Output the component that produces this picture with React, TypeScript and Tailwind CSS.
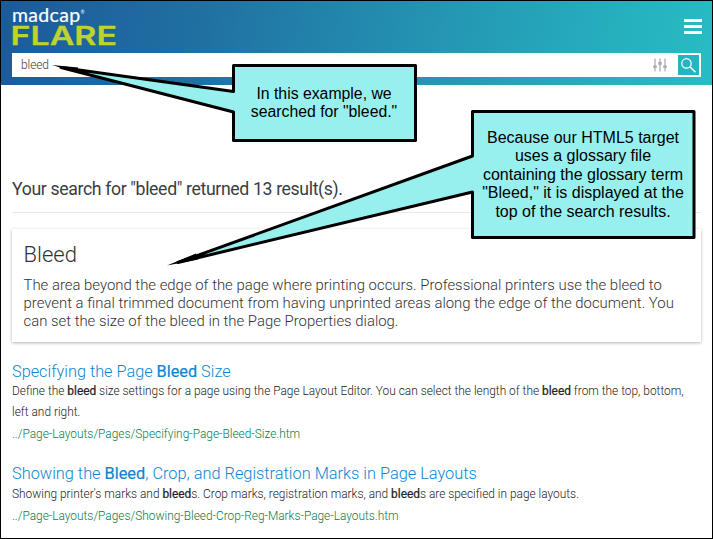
import React from "react";

const Line = ({ className = "", children }: { className?: string; children: React.ReactNode }) => (
  <div className={"whitespace-nowrap " + className}><span>{children}</span></div>
);

const B = ({ children }: { children: React.ReactNode }) => (
  <b className="font-normal [-webkit-text-stroke:0.2px_currentColor]">{children}</b>
);

export default function App() {
  return (
    <div className="relative h-[539px] w-[713px] overflow-hidden border border-black bg-white font-['Roboto',sans-serif] text-[#333]">
      <header className="flex h-[84px] flex-col bg-[linear-gradient(100deg,#1c5a9b_0%,#2070a2_28%,#2596b3_62%,#26b2bf_88%,#27bcc4_100%)] pl-[11px] pr-[11px]">
        <div className="flex h-[52px] justify-between">
          <div className="flex flex-col">
            <div className="mt-[4px] flex h-[18px] items-start whitespace-nowrap font-['Lato',sans-serif] text-[19.5px] leading-[19px] tracking-[0.3px] text-white">
              <span className="[-webkit-text-stroke:0.2px_#fff]">madcap</span>
              <span className="mt-[5px] text-[5px] leading-[5px]">®</span>
            </div>
            <svg className="-ml-[3px] overflow-visible" width="114" height="30" viewBox="0 0 114 30">
              <text x="1.5" y="21.9" textLength="106.5" lengthAdjust="spacingAndGlyphs" fill="#bdd42f" stroke="#bdd42f" strokeWidth="0.3" className="font-['Inter',sans-serif] text-[25.5px] font-semibold">FLARE</text>
            </svg>
          </div>
          <div className="mr-[-1px] mt-[18px] flex w-[18px] flex-col gap-[3px]">
            <i className="h-[3px] bg-white" />
            <i className="h-[3px] bg-white" />
            <i className="h-[3px] bg-white" />
          </div>
        </div>
        <div className="flex h-[24px] items-center justify-between bg-white pl-[9px] pr-[2px]">
          <span className="text-[12px] font-light leading-[24px] tracking-[-0.1px] text-[#444]">bleed</span>
          <div className="flex items-center gap-[11px]">
            <svg width="14" height="14" viewBox="0 0 14 14" fill="none" stroke="#a3a9ad">
              <path d="M2 .5v13M7 .5v13M12 .5v13" strokeWidth="1.2" />
              <path d="M.3 8.8h3.4M5.3 5.4h3.4M10.3 8.8h3.4" strokeWidth="2.6" />
            </svg>
            <div className="flex h-[20px] w-[21px] items-center justify-center bg-[#26b5c0]">
              <svg width="17" height="17" viewBox="0 0 17 17" fill="none" stroke="#fff" strokeWidth="1.2">
                <circle cx="6.5" cy="6.4" r="4.7" />
                <path d="M9.9 9.8l5.6 5.4" strokeWidth="1.5" />
              </svg>
            </div>
          </div>
        </div>
      </header>

      <main className="flex flex-col px-[11px]">
        <Line className="mt-[92px] text-[17.7px] leading-[24px] tracking-[-0.37px] text-[#3a3d42]">Your search for "bleed" returned 13 result(s).</Line>
        <div className="mt-[11px] h-px bg-[#e8e8e8]" />
        <section className="mt-4 h-[113px] bg-white pl-[11.5px] pt-3 font-light shadow-[0_1px_3px_rgba(0,0,0,0.3)]">
          <Line className="text-[22px] leading-[28px]">Bleed</Line>
          <div className="mt-[7px] text-[14.9px] leading-[18px]">
            <Line>The area beyond the edge of the page where printing occurs. Professional printers use the bleed to</Line>
            <Line>prevent a final trimmed document from having unprinted areas along the edge of the document. You</Line>
            <Line>can set the size of the bleed in the Page Properties dialog.</Line>
          </div>
        </section>

        <article className="mt-[19px] text-[11.9px] font-light leading-[21px] text-[#222]">
          <Line className="-mb-[2px] text-[16.3px] leading-[22px] text-[#0b86d2]">Specifying the Page <B>Bleed</B> Size</Line>
          <Line>Define the <B>bleed</B> size settings for a page using the Page Layout Editor. You can select the length of the <B>bleed</B> from the top, bottom,</Line>
          <Line>left and right.</Line>
          <Line className="leading-[22px] text-[#0a7a46]">../Page-Layouts/Pages/Specifying-Page-Bleed-Size.htm</Line>
        </article>
        <article className="mt-[19px] text-[11.9px] font-light leading-[21px] text-[#222]">
          <Line className="text-[16.35px] leading-[20px] text-[#0b86d2]">Showing the <B>Bleed</B>, Crop, and Registration Marks in Page Layouts</Line>
          <Line>Showing printer's marks and <B>bleed</B>s. Crop marks, registration marks, and <B>bleed</B>s are specified in page layouts.</Line>
          <Line className="leading-[22px] text-[#0a7a46]">../Page-Layouts/Pages/Showing-Bleed-Crop-Reg-Marks-Page-Layouts.htm</Line>
        </article>
      </main>

      <svg className="absolute left-[-1px] top-[-1px]" width="713" height="539" viewBox="0 0 713 539" fill="#97f0ed" stroke="#000" strokeWidth="3" strokeLinejoin="round">
        <path d="M233.5 65.5H415.5V140.5H233.5V112L61 67.5L233.5 91.5Z" />
        <path d="M472.5 111.5H694V237.5H472.5V192L178 262.5L472.5 156Z" />
        <path fill="#000" stroke="none" d="M52 65L78 67.5L78 73ZM167 265.5L196 253.5L198 259.5Z" />
      </svg>
      <div className="absolute left-[232px] top-[84px] w-[182px] text-center font-['Liberation_Sans',sans-serif] text-[15.8px] leading-[18px] text-black">
        <Line>In this example, we</Line>
        <Line>searched for "bleed."</Line>
      </div>
      <div className="absolute left-[471px] top-[127.5px] w-[222px] text-center font-['Liberation_Sans',sans-serif] text-[16px] leading-[18.5px] text-black">
        <Line>Because our HTML5 target</Line>
        <Line>uses a glossary file</Line>
        <Line>containing the glossary term</Line>
        <Line>"Bleed," it is displayed at the</Line>
        <Line>top of the search results.</Line>
      </div>
    </div>
  );
}
